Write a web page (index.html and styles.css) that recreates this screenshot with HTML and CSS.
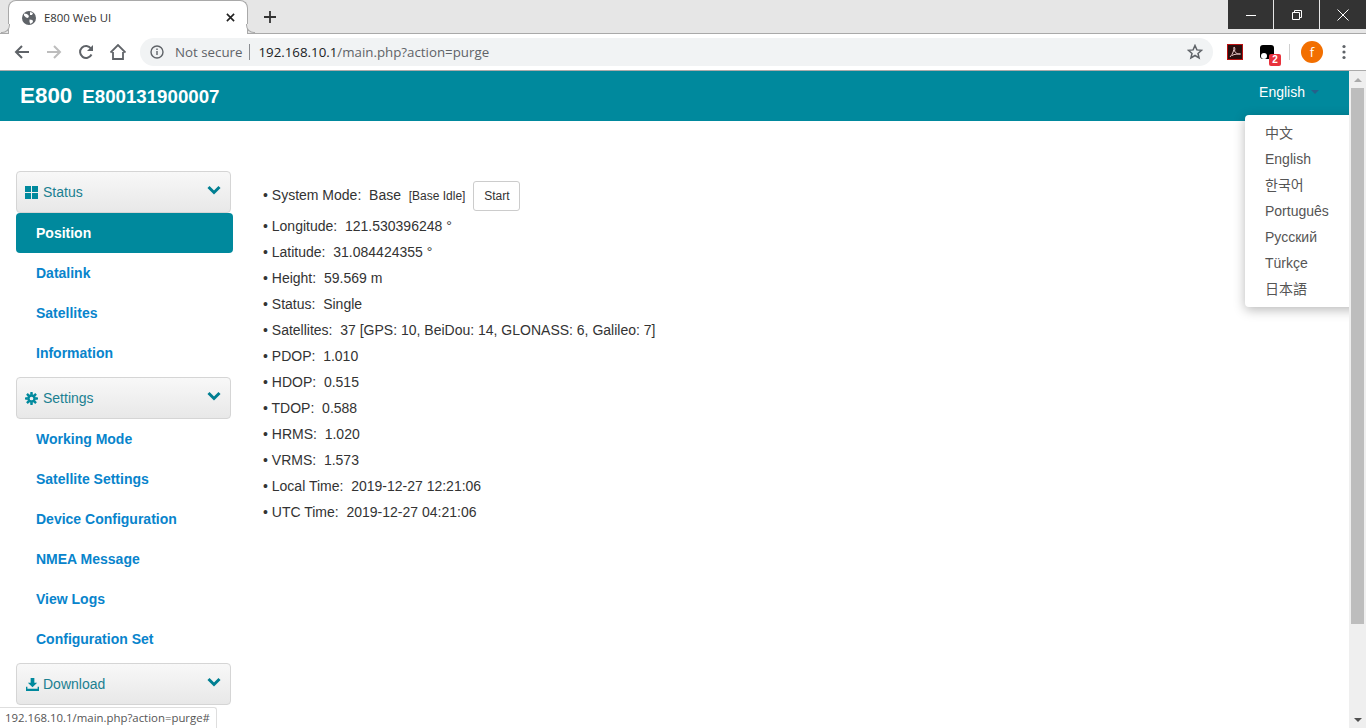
FILE: index.html
```html
<!DOCTYPE html>
<html lang="en">
<head>
<meta charset="utf-8">
<title>E800 Web UI</title>
<link rel="stylesheet" href="styles.css">
</head>
<body>
<div class="tabstrip">
  <div class="tab">
    <svg class="favicon" viewBox="0 0 16 16"><circle cx="8" cy="8" r="7" fill="#5f6368"/><path d="M3 3.500l3 .5 2 2-1 2-2-.5-2-2zM9 2l3 1-1 2-2 0zM8.500 9.500l3 .5 .5 2-2.500 2-1-2z" fill="#fff"/></svg>
    <span class="tab-title">E800 Web UI</span>
    <svg class="tab-close" viewBox="0 0 10 10"><path d="M1 1l8 8M9 1l-8 8" stroke="#222" stroke-width="1.800"/></svg>
  </div>
  <svg class="new-tab" viewBox="0 0 12 12"><path d="M6 0v12M0 6h12" stroke="#333" stroke-width="1.800"/></svg>
  <div class="win-controls">
    <div class="win-btn"><svg width="10" height="10" viewBox="0 0 10 10"><path d="M0 5.500h10" stroke="#fff"/></svg></div>
    <div class="win-btn"><svg width="10" height="10" viewBox="0 0 10 10"><path d="M.5 2.500h7v7h-7zM2.500 2.500v-2h7v7h-2" fill="none" stroke="#fff"/></svg></div>
    <div class="win-btn"><svg width="12" height="12" viewBox="0 0 12 12"><path d="M.5 .5l11 11M11.500 .5l-11 11" stroke="#fff"/></svg></div>
  </div>
</div>
<div class="toolbar">
  <svg class="nav-icon" viewBox="0 0 16 16"><path d="M15 8H2M8 2L2 8l6 6" fill="none" stroke="#5f6368" stroke-width="2"/></svg>
  <svg class="nav-icon" viewBox="0 0 16 16"><path d="M1 8h13M8 2l6 6-6 6" fill="none" stroke="#bdbdbd" stroke-width="2"/></svg>
  <svg class="nav-icon" viewBox="0 0 16 16"><path d="M13.500 10.500A6 6 0 1 1 13 4.500" fill="none" stroke="#5f6368" stroke-width="2"/><path d="M15 1v6H9z" fill="#5f6368"/></svg>
  <svg class="nav-icon" viewBox="0 0 16 16"><path d="M3 8v7h10V8M.5 8.500L8 1l7.500 7.500" fill="none" stroke="#5f6368" stroke-width="1.800"/></svg>
  <div class="omnibox">
    <svg class="info-icon" viewBox="0 0 14 14"><circle cx="7" cy="7" r="6" fill="none" stroke="#5f6368" stroke-width="1.400"/><path d="M7 6v4M7 3.500v1.500" stroke="#5f6368" stroke-width="1.400"/></svg>
    <span class="not-secure">Not secure</span>
    <span class="omni-sep"></span>
    <span class="url"><span class="url-host">192.168.10.1</span>/main.php?action=purge</span>
    <svg class="star" viewBox="0 0 16 16"><path d="M8 1.500l1.900 4.400 4.700.4-3.600 3.100 1.100 4.600L8 11.500l-4.100 2.500 1.100-4.600L1.400 6.300l4.700-.4z" fill="none" stroke="#5f6368" stroke-width="1.500"/></svg>
  </div>
  <div class="ext-pdf"><svg viewBox="0 0 14 14" width="14" height="14"><path d="M2 12c3-3 4-7 4-10 1 0 1 3 .5 4 2 3 3 3 6 3-3 0-6 0-8.500 1.500" fill="none" stroke="#e6c8c8" stroke-width="1"/></svg></div>
  <div class="ext-black">
    <span class="ext-dot"></span>
    <span class="ext-badge">2</span>
  </div>
  <span class="tool-sep"></span>
  <div class="avatar">f</div>
  <svg class="menu-dots" viewBox="0 0 4 16"><circle cx="2" cy="2.500" r="1.600" fill="#5f6368"/><circle cx="2" cy="8" r="1.600" fill="#5f6368"/><circle cx="2" cy="13.500" r="1.600" fill="#5f6368"/></svg>
</div>
<div class="viewport">
  <div class="page">
    <header class="app-header">
      <span class="brand">E800</span>
      <span class="serial">E800131900007</span>
      <span class="lang-toggle">English<span class="caret"></span></span>
    </header>
    <div class="app-body">
      <nav class="sidebar">
        <div class="group-head">
          <svg class="group-icon" viewBox="0 0 13 13"><path d="M0 0h6v6H0zM7 0h6v6H7zM0 7h6v6H0zM7 7h6v6H7z" fill="#00899d"/></svg>
          <span>Status</span>
          <svg class="chev" viewBox="0 0 14 10"><path d="M1.500 2l5.500 5.500L12.500 2" fill="none" stroke="#007f92" stroke-width="3"/></svg>
        </div>
        <a class="nav-item active" href="#">Position</a>
        <a class="nav-item" href="#">Datalink</a>
        <a class="nav-item" href="#">Satellites</a>
        <a class="nav-item" href="#">Information</a>
        <div class="group-head">
          <svg class="group-icon" viewBox="0 0 14 14"><path d="M7 2.500a4.500 4.500 0 1 0 0 9 4.500 4.500 0 0 0 0-9zm0 2.500a2 2 0 1 1 0 4 2 2 0 0 1 0-4z" fill="#00899d"/><path d="M5.800 0h2.400l.3 3H5.500zM5.800 14h2.400l.3-3H5.500zM0 5.800v2.400l3 .3V5.500zM14 5.800v2.400l-3 .3V5.500zM1.200 3l1.800-1.800 2.200 2-2 2zM12.800 3L11 1.200l-2.200 2 2 2zM1.200 11L3 12.800l2.200-2-2-2zM12.800 11L11 12.800l-2.200-2 2-2z" fill="#00899d"/></svg>
          <span>Settings</span>
          <svg class="chev" viewBox="0 0 14 10"><path d="M1.500 2l5.500 5.500L12.500 2" fill="none" stroke="#007f92" stroke-width="3"/></svg>
        </div>
        <a class="nav-item" href="#">Working Mode</a>
        <a class="nav-item" href="#">Satellite Settings</a>
        <a class="nav-item" href="#">Device Configuration</a>
        <a class="nav-item" href="#">NMEA Message</a>
        <a class="nav-item" href="#">View Logs</a>
        <a class="nav-item" href="#">Configuration Set</a>
        <div class="group-head">
          <svg class="group-icon group-icon-dl" viewBox="0 0 14 14"><path d="M5 0h4v5h3L7 10 2 5h3z" fill="#00899d"/><path d="M0 9.500h1.500v2h11v-2H14V14H0z" fill="#00899d"/></svg>
          <span>Download</span>
          <svg class="chev" viewBox="0 0 14 10"><path d="M1.500 2l5.500 5.500L12.500 2" fill="none" stroke="#007f92" stroke-width="3"/></svg>
        </div>
      </nav>
      <main class="content">
        <div class="row row-first">• System Mode:&nbsp; Base&nbsp; <span class="small">[Base Idle]</span> <button class="btn" type="button">Start</button></div>
        <div class="row">• Longitude:&nbsp; 121.530396248 °</div>
        <div class="row">• Latitude:&nbsp; 31.084424355 °</div>
        <div class="row">• Height:&nbsp; 59.569 m</div>
        <div class="row">• Status:&nbsp; Single</div>
        <div class="row">• Satellites:&nbsp; 37 [GPS: 10, BeiDou: 14, GLONASS: 6, Galileo: 7]</div>
        <div class="row">• PDOP:&nbsp; 1.010</div>
        <div class="row">• HDOP:&nbsp; 0.515</div>
        <div class="row">• TDOP:&nbsp; 0.588</div>
        <div class="row">• HRMS:&nbsp; 1.020</div>
        <div class="row">• VRMS:&nbsp; 1.573</div>
        <div class="row">• Local Time:&nbsp; 2019-12-27 12:21:06</div>
        <div class="row">• UTC Time:&nbsp; 2019-12-27 04:21:06</div>
      </main>
    </div>
    <ul class="lang-menu">
      <li>中文</li>
      <li>English</li>
      <li>한국어</li>
      <li>Português</li>
      <li>Русский</li>
      <li>Türkçe</li>
      <li>日本語</li>
    </ul>
  </div>
  <div class="scrollbar">
    <div class="sb-arrow sb-up"></div>
    <div class="sb-thumb"></div>
    <div class="sb-arrow sb-down"></div>
  </div>
  <div class="status-bubble">192.168.10.1/main.php?action=purge#</div>
</div>
</body>
</html>
```
FILE: styles.css
```css
* { box-sizing: border-box; }
html, body { margin: 0; height: 728px; overflow: hidden; }
body { font-family: "Liberation Sans", Arial, sans-serif; font-size: 14px; color: #333; background: #fff; }

.tabstrip { height: 34px; background: #e6e6e6; border-bottom: 1px solid #a9a9a9; display: flex; align-items: flex-start; padding-left: 8px; }
.tab { width: 240px; height: 34px; background: #fff; border: 1px solid #a9a9a9; border-bottom: 0; border-radius: 8px 8px 0 0; display: flex; align-items: center; padding: 0 12px; position: relative; }
.tab::before, .tab::after { content: ""; position: absolute; bottom: 1px; width: 8px; height: 8px; border-bottom: 1px solid #a9a9a9; }
.tab::before { left: -8px; border-right: 1px solid #a9a9a9; border-bottom-right-radius: 8px; background: #e6e6e6; }
.tab::after { right: -8px; border-left: 1px solid #a9a9a9; border-bottom-left-radius: 8px; background: #e6e6e6; }
.favicon { width: 16px; height: 16px; margin-right: 7px; }
.tab-title { font-family: "Open Sans", sans-serif; font-size: 11.4px; color: #333; flex: 1; }
.tab-close { width: 9px; height: 9px; }
.new-tab { width: 12px; height: 12px; margin: 11px 0 0 16px; }
.win-controls { margin-left: auto; display: flex; gap: 1px; height: 29px; }
.win-btn { width: 45px; background: #333; display: flex; align-items: center; justify-content: center; }
.win-btn:last-child { width: 46px; }

.toolbar { height: 37px; background: #fff; border-bottom: 1px solid #ababab; display: flex; align-items: center; padding: 0 0 1px 14px; }
.nav-icon { width: 16px; height: 16px; margin-right: 16px; }
.nav-icon:nth-child(4) { margin-right: 14px; }
.omnibox { width: 1073px; height: 28px; background: #f1f3f4; border-radius: 14px; display: flex; align-items: center; padding: 0 10px; font-family: "Open Sans", sans-serif; font-size: 13.3px; }
.info-icon { width: 14px; height: 14px; margin-right: 11px; }
.not-secure { color: #5f6368; }
.omni-sep { width: 1px; height: 16px; background: #8a8d91; margin: 0 8px 0 7px; }
.url { color: #5f6368; flex: 1; }
.url-host { color: #202124; }
.star { width: 16px; height: 16px; }
.ext-pdf { width: 16px; height: 16px; background: #2a0f0f; border: 1px solid #b11; margin-left: 14px; display: flex; align-items: center; justify-content: center; }
.ext-black { width: 14px; height: 14px; background: #000; border-radius: 3px; margin-left: 17px; position: relative; }
.ext-dot { position: absolute; left: 1px; bottom: 0; width: 6px; height: 6px; border-radius: 50%; background: #fff; }
.ext-badge { position: absolute; left: 9px; top: 9px; width: 12px; height: 12px; background: #e8323c; color: #fff; font-size: 10px; font-weight: bold; line-height: 12px; text-align: center; border-radius: 2px; }
.tool-sep { width: 1px; height: 16px; background: #d0d0d0; margin: 0 11px 0 15px; }
.avatar { width: 22px; height: 22px; border-radius: 50%; background: #f26f00; color: #fff; font-size: 13px; line-height: 22px; text-align: center; font-family: "Open Sans", sans-serif; }
.menu-dots { width: 4px; height: 16px; margin-left: 19px; }

.viewport { position: relative; height: 657px; display: flex; }
.page { width: 1349px; position: relative; overflow: hidden; }
.app-header { height: 50px; background: #00899d; color: #fff; display: flex; align-items: center; padding: 0 30px 0 20px; font-weight: bold; }
.brand { font-size: 22.4px; margin-right: 10px; }
.serial { font-size: 18.7px; margin-top: 1px; }
.lang-toggle { margin-left: auto; font-size: 14px; font-weight: normal; display: flex; align-items: center; margin-top: -8px; }
.caret { width: 0; height: 0; border: 4px solid transparent; border-top-color: #26608a; border-bottom: 0; margin-left: 6px; }

.app-body { display: flex; align-items: flex-start; }
.sidebar { width: 233px; margin: 50px 0 0 16px; flex: none; display: flex; flex-direction: column; }
.group-head { width: 215px; height: 42px; border: 1px solid #d5d5d5; border-radius: 4px; background: linear-gradient(#f8f8f8, #e8e8e8); display: flex; align-items: center; padding: 0 8px; color: #1b8091; font-size: 14px; }
.group-icon { width: 13px; height: 13px; margin-right: 5px; }
.group-icon-dl { margin: 0 4px 0 1px; }
.chev { width: 14px; height: 10px; margin: -4px 1px 0 auto; }
.nav-item { height: 40px; width: 217px; line-height: 40px; padding-left: 20px; color: #0884cc; font-weight: bold; text-decoration: none; font-size: 14px; }
.nav-item.active { background: #00899d; color: #fff; border-radius: 4px; }
.nav-item + .group-head { margin-top: 4px; }

.content { margin: 59px 0 0 14px; }
.row { height: 26px; line-height: 26px; white-space: nowrap; }
.row-first { height: 30px; line-height: 30px; margin-bottom: 3px; }
.small { font-size: 12px; }
.btn { height: 30px; width: 47px; padding: 0; margin-left: 4px; background: #fff; border: 1px solid #ccc; border-radius: 3px; font: 12px "Liberation Sans", Arial, sans-serif; color: #333; }

.lang-menu { position: absolute; top: 44px; left: 1245px; width: 120px; margin: 0; padding: 5px 0 5px; list-style: none; background: #fff; border-radius: 4px; box-shadow: 0 3px 12px rgba(0,0,0,.28); color: #555; font-family: "Liberation Sans", "Noto Sans CJK SC", sans-serif; }
.lang-menu li { height: 26px; line-height: 26px; padding-left: 20px; }

.scrollbar { width: 17px; background: #efefef; display: flex; flex-direction: column; position: relative; }
.sb-thumb { height: 536px; width: 13px; margin: 0 auto; background: #bdbdbd; }
.sb-arrow { height: 17px; display: flex; justify-content: center; align-items: center; }
.sb-arrow::before { content: ""; border: 4px solid transparent; }
.sb-up::before { border-bottom-color: #aaa; border-top: 0; }
.sb-down { margin-top: auto; }
.sb-down::before { border-top-color: #505050; border-bottom: 0; }

.status-bubble { position: absolute; left: 0; bottom: 0; height: 21px; width: 217px; background: #fff; border: 1px solid #dedede; border-left: 0; border-bottom: 0; border-radius: 0 3px 0 0; font-family: "Open Sans", sans-serif; font-size: 11.4px; line-height: 20px; padding-left: 5px; color: #555; white-space: nowrap; }
```
